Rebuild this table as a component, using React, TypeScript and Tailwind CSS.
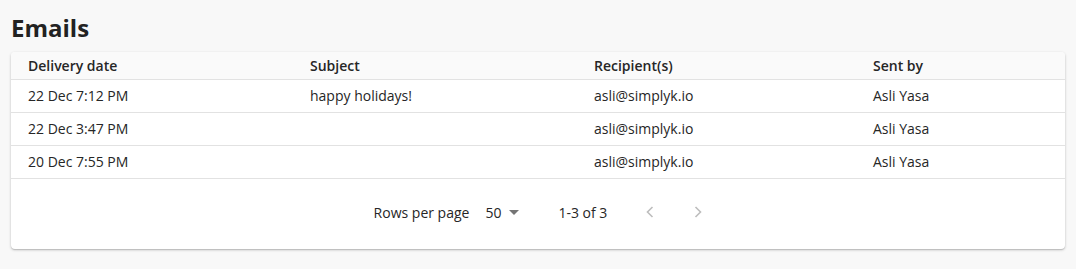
import React from "react";

type Email = {
  date: string;
  subject: string;
  recipient: string;
  sender: string;
};

const emails: Email[] = [
  { date: "22 Dec 7:12 PM", subject: "happy holidays!", recipient: "asli@simplyk.io", sender: "Asli Yasa" },
  { date: "22 Dec 3:47 PM", subject: "", recipient: "asli@simplyk.io", sender: "Asli Yasa" },
  { date: "20 Dec 7:55 PM", subject: "", recipient: "asli@simplyk.io", sender: "Asli Yasa" },
];

const cols = "grid grid-cols-[282px_284px_279px_1fr]";

const App: React.FC = () => {
  return (
    <div
      className="min-h-[269px] bg-[#f8f8f8] px-[11px] pt-[14px] text-[#262626]"
      style={{ fontFamily: "'Open Sans', 'Noto Sans', sans-serif" }}
    >
      <h1 className="text-[24px] font-bold leading-[28px] text-[#222]">Emails</h1>

      <div className="mt-[10px] rounded bg-white shadow-[0_1px_3px_rgba(0,0,0,0.2),0_1px_1px_rgba(0,0,0,0.12)]">
        <div className={`${cols} h-[28px] items-center rounded-t border-b border-[#e2e2e2] bg-[#fafafa] pb-[1px] text-[14px] font-semibold`}>
          <div className="pl-[17px]">Delivery date</div>
          <div className="pl-[17px]">Subject</div>
          <div className="pl-[17px]">Recipient(s)</div>
          <div className="pl-[17px]">Sent by</div>
        </div>

        {emails.map((email, i) => (
          <div
            key={i}
            className={`${cols} h-[33px] items-center border-b border-[#e2e2e2] pb-[2px] text-[14px]`}
          >
            <div className="pl-[17px]">{email.date}</div>
            <div className="pl-[17px]">{email.subject}</div>
            <div className="pl-[17px]">{email.recipient}</div>
            <div className="pl-[17px]">{email.sender}</div>
          </div>
        ))}

        <div className="flex h-[70px] items-center justify-center pb-[4px] text-[14px]">
          <div className="flex items-center">
            <span>Rows per page</span>
            <button className="ml-[16px] flex items-center">
              <span>50</span>
              <svg width="10" height="5" viewBox="0 0 10 5" className="ml-[8px] mt-[1px]">
                <path d="M0 0 L10 0 L5 5 Z" fill="#757575" />
              </svg>
            </button>
            <span className="ml-[39px]">1-3 of 3</span>
            <svg width="8" height="12" viewBox="0 0 8 12" className="ml-[39px]">
              <path d="M6.5 1 L1.5 6 L6.5 11" stroke="#bdbdbd" strokeWidth="1.6" fill="none" />
            </svg>
            <svg width="8" height="12" viewBox="0 0 8 12" className="ml-[40px]">
              <path d="M1.5 1 L6.5 6 L1.5 11" stroke="#bdbdbd" strokeWidth="1.6" fill="none" />
            </svg>
          </div>
        </div>
      </div>
    </div>
  );
};

export default App;
